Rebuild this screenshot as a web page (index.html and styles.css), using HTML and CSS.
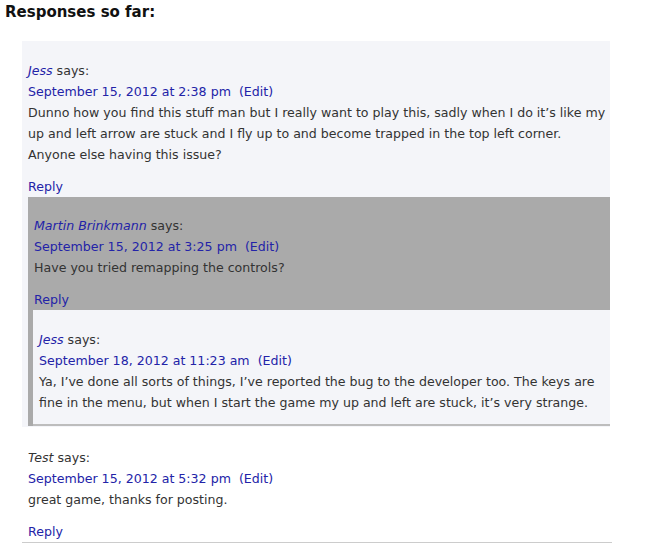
FILE: index.html
```html
<!DOCTYPE html>
<html>
<head>
<meta charset="utf-8">
<link rel="stylesheet" href="styles.css">
</head>
<body>
<h3 class="heading">Responses so far:</h3>
<ol class="comments">
  <li class="comment alt">
    <div class="line"><a class="author" href="#">Jess</a> says:</div>
    <div class="line meta"><a href="#">September 15, 2012 at 2:38 pm</a>&nbsp; <a href="#">(Edit)</a></div>
    <p class="text">Dunno how you find this stuff man but I really want to play this, sadly when I do it’s like my up and left arrow are stuck and I fly up to and become trapped in the top left corner. Anyone else having this issue?</p>
    <div class="line"><a href="#" class="reply">Reply</a></div>
    <ul class="children">
      <li class="comment admin">
        <div class="line"><a class="author" href="#">Martin Brinkmann</a> says:</div>
        <div class="line meta"><a href="#">September 15, 2012 at 3:25 pm</a>&nbsp; <a href="#">(Edit)</a></div>
        <p class="text">Have you tried remapping the controls?</p>
        <div class="line"><a href="#" class="reply">Reply</a></div>
        <ul class="children">
          <li class="comment alt inner">
            <div class="line"><a class="author" href="#">Jess</a> says:</div>
            <div class="line meta"><a href="#">September 18, 2012 at 11:23 am</a>&nbsp; <a href="#">(Edit)</a></div>
            <p class="text last">Ya, I’ve done all sorts of things, I’ve reported the bug to the developer too. The keys are fine in the menu, but when I start the game my up and left are stuck, it’s very strange.</p>
          </li>
        </ul>
      </li>
    </ul>
  </li>
  <li class="comment plain">
    <div class="line"><span class="author plainname">Test</span> says:</div>
    <div class="line meta"><a href="#">September 15, 2012 at 5:32 pm</a>&nbsp; <a href="#">(Edit)</a></div>
    <p class="text">great game, thanks for posting.</p>
    <div class="line"><a href="#" class="reply">Reply</a></div>
  </li>
</ol>
</body>
</html>
```
FILE: styles.css
```css
html, body {
  margin: 0;
  padding: 0;
  background: #ffffff;
}
body {
  font-family: "DejaVu Sans", Verdana, sans-serif;
  font-size: 12.6px;
  color: #333333;
}
a {
  color: #2323a8;
  text-decoration: none;
}
.heading {
  margin: 0;
  padding: 3px 0 0 5px;
  height: 41px;
  box-sizing: border-box;
  font-size: 15px;
  font-weight: bold;
  color: #111111;
  line-height: 18px;
}
.comments, .children {
  list-style: none;
  margin: 0;
  padding: 0;
}
.comments {
  margin-left: 22px;
  width: 588px;
}
.line {
  line-height: 21px;
  height: 21px;
  white-space: nowrap;
}
.text {
  margin: 0 4px 11px 0;
  line-height: 21px;
}
.text.last {
  margin-bottom: 0;
}
.author {
  font-style: italic;
}
.plainname {
  color: #333333;
}
.comment.alt {
  background: #f4f5f9;
  padding: 19px 0 1px 6px;
}
.comment.admin {
  background: #aaaaaa;
  padding: 18px 0 0 6px;
}
.comment.inner {
  margin-left: -1px;
  padding: 19px 0 11px 6px;
  border-bottom: 2px solid #bdbdbd;
}
.comment.plain {
  padding: 20px 0 0 6px;
  margin-right: -2px;
  border-bottom: 1px solid #cccccc;
}
```
